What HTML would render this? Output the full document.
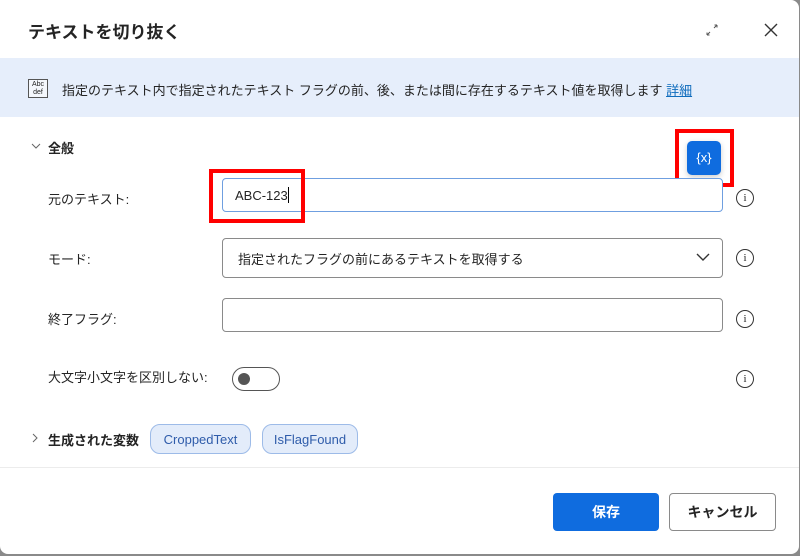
<!DOCTYPE html>
<html><head><meta charset="utf-8"><style>
*{box-sizing:border-box;margin:0;padding:0}
body{width:800px;height:556px;background:#8a8a8a;font-family:"Liberation Sans","Noto Sans CJK JP",sans-serif;color:#242424;position:relative;overflow:hidden}
.dlg{position:absolute;left:0;top:0;width:799px;height:554px;background:#fff;border-radius:0 8px 8px 8px;overflow:hidden}
.a{position:absolute}
.title{left:28px;top:18px;font-size:17px;font-weight:bold}
.band{left:0;top:58px;width:800px;height:59px;background:#e6eefb}
.info{font-size:13px;left:62px;top:80px}
.info a{color:#0f6cbd;text-decoration:underline}
.lbl{font-size:13px;left:48px}
.inp{left:222px;width:501px;border:1px solid #8a8a8a;border-radius:4px;background:#fff;font-size:13px;padding-left:12px;display:flex;align-items:center}
.ic{left:736px;width:18px;height:18px;border:1.3px solid #333;border-radius:50%;font-size:11px;text-align:center;line-height:16px;font-family:"Liberation Serif",serif}
.red{border:4px solid #ff0000}
.chip{top:424px;height:30px;border:1px solid #9dbbe8;background:#e3ecfa;border-radius:10px;color:#2f5caa;font-size:13px;display:flex;align-items:center;justify-content:center}
</style></head><body>
<div class="dlg">
<div class="a title">テキストを切り抜く</div>
<svg class="a" style="left:705px;top:23px" width="14" height="14" viewBox="0 0 14 14"><path d="M2 12L5 9M2 12h2.5M2 12V9.5M12 2L9 5M12 2H9.5M12 2v2.5" stroke="#555" stroke-width="1" fill="none"/></svg>
<svg class="a" style="left:764px;top:23px" width="14" height="14" viewBox="0 0 14 14"><path d="M1 1L13 13M13 1L1 13" stroke="#333" stroke-width="1.4"/></svg>
<div class="a band"></div>
<div class="a" style="left:28px;top:79px;width:20px;height:19px;border:1px solid #555;font-size:7px;line-height:8px;text-align:center;padding-top:1px;background:#f4f7fc">Abc<br>def</div>
<div class="a info">指定のテキスト内で指定されたテキスト フラグの前、後、または間に存在するテキスト値を取得します <a>詳細</a></div>
<svg class="a" style="left:31px;top:142px" width="10" height="8" viewBox="0 0 10 8"><path d="M1 2l4 4 4-4" stroke="#666" fill="none"/></svg>
<div class="a" style="left:48px;top:138px;font-size:13px;font-weight:bold">全般</div>
<div class="a" style="left:687px;top:141px;width:34px;height:34px;background:#0f6cdf;border-radius:5px;color:#fff;font-size:13px;text-align:center;line-height:33px;box-shadow:0 2px 6px rgba(0,0,0,.2)">{x}</div>
<div class="a red" style="left:675px;top:129px;width:59px;height:58px"></div>
<div class="a lbl" style="top:189px">元のテキスト:</div>
<div class="a inp" style="top:178px;height:34px;border-color:#6f9fe0;border-width:1.5px">ABC-123<span style="display:inline-block;width:1px;height:16px;background:#000"></span></div>
<div class="a red" style="left:209px;top:169px;width:96px;height:54px"></div>
<div class="a ic" style="top:189px">i</div>
<div class="a lbl" style="top:249px">モード:</div>
<div class="a inp" style="top:238px;height:40px;padding-left:15px">指定されたフラグの前にあるテキストを取得する</div>
<svg class="a" style="left:696px;top:252px" width="14" height="10" viewBox="0 0 14 10"><path d="M1 2l6 6 6-6" stroke="#333" stroke-width="1.4" fill="none"/></svg>
<div class="a ic" style="top:249px">i</div>
<div class="a lbl" style="top:309px">終了フラグ:</div>
<div class="a inp" style="top:298px;height:34px"></div>
<div class="a ic" style="top:310px">i</div>
<div class="a lbl" style="top:367px">大文字小文字を区別しない:</div>
<div class="a" style="left:232px;top:367px;width:48px;height:24px;border:1.3px solid #555;border-radius:12px"><div class="a" style="left:5px;top:5px;width:12px;height:12px;border-radius:50%;background:#555"></div></div>
<div class="a ic" style="top:370px">i</div>
<svg class="a" style="left:31px;top:433px" width="8" height="10" viewBox="0 0 8 10"><path d="M2 1l4 4-4 4" stroke="#666" fill="none"/></svg>
<div class="a" style="left:48px;top:430px;font-size:13px;font-weight:bold">生成された変数</div>
<div class="a chip" style="left:150px;width:101px">CroppedText</div>
<div class="a chip" style="left:262px;width:96px">IsFlagFound</div>
<div class="a" style="left:0;top:467px;width:800px;height:1px;background:#ececec"></div>
<div class="a" style="left:553px;top:493px;width:106px;height:38px;background:#0f6cdf;border-radius:4px;color:#fff;font-size:14px;font-weight:bold;text-align:center;line-height:38px">保存</div>
<div class="a" style="left:669px;top:493px;width:107px;height:38px;border:1px solid #8a8a8a;border-radius:4px;font-size:14px;font-weight:bold;text-align:center;line-height:36px">キャンセル</div>
</div>
</body></html>
